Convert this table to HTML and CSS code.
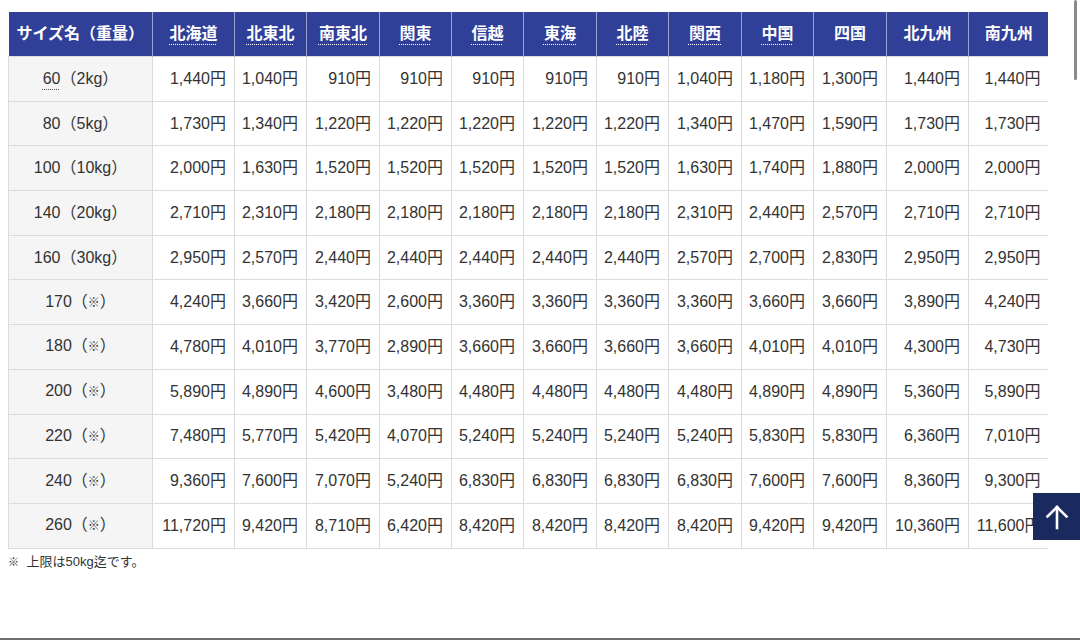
FILE: index.html
```html
<!DOCTYPE html>
<html lang="ja">
<head>
<meta charset="utf-8">
<link rel="stylesheet" href="styles.css">
</head>
<body>
<div class="page">
  <div class="table-wrap">
    <table class="rate">
      <colgroup>
        <col class="c-size"><col class="c-w"><col class="c-n"><col class="c-m"><col class="c-n"><col class="c-n"><col class="c-m"><col class="c-n"><col class="c-m"><col class="c-n"><col class="c-m"><col class="c-w"><col class="c-l">
      </colgroup>
      <thead>
        <tr>
          <th>サイズ名（重量）</th>
          <th><span class="abbr">北海道</span></th>
          <th><span class="abbr">北東北</span></th>
          <th><span class="abbr">南東北</span></th>
          <th><span class="abbr">関東</span></th>
          <th><span class="abbr">信越</span></th>
          <th><span class="abbr">東海</span></th>
          <th><span class="abbr">北陸</span></th>
          <th><span class="abbr">関西</span></th>
          <th><span class="abbr">中国</span></th>
          <th>四国</th>
          <th>北九州</th>
          <th>南九州</th>
        </tr>
      </thead>
      <tbody>
        <tr><th><span class="abbr-d">60</span>（2kg）</th><td>1,440円</td><td>1,040円</td><td>910円</td><td>910円</td><td>910円</td><td>910円</td><td>910円</td><td>1,040円</td><td>1,180円</td><td>1,300円</td><td>1,440円</td><td>1,440円</td></tr>
        <tr><th>80（5kg）</th><td>1,730円</td><td>1,340円</td><td>1,220円</td><td>1,220円</td><td>1,220円</td><td>1,220円</td><td>1,220円</td><td>1,340円</td><td>1,470円</td><td>1,590円</td><td>1,730円</td><td>1,730円</td></tr>
        <tr><th>100（10kg）</th><td>2,000円</td><td>1,630円</td><td>1,520円</td><td>1,520円</td><td>1,520円</td><td>1,520円</td><td>1,520円</td><td>1,630円</td><td>1,740円</td><td>1,880円</td><td>2,000円</td><td>2,000円</td></tr>
        <tr><th>140（20kg）</th><td>2,710円</td><td>2,310円</td><td>2,180円</td><td>2,180円</td><td>2,180円</td><td>2,180円</td><td>2,180円</td><td>2,310円</td><td>2,440円</td><td>2,570円</td><td>2,710円</td><td>2,710円</td></tr>
        <tr><th>160（30kg）</th><td>2,950円</td><td>2,570円</td><td>2,440円</td><td>2,440円</td><td>2,440円</td><td>2,440円</td><td>2,440円</td><td>2,570円</td><td>2,700円</td><td>2,830円</td><td>2,950円</td><td>2,950円</td></tr>
        <tr><th>170（<span class="kome">※</span>）</th><td>4,240円</td><td>3,660円</td><td>3,420円</td><td>2,600円</td><td>3,360円</td><td>3,360円</td><td>3,360円</td><td>3,360円</td><td>3,660円</td><td>3,660円</td><td>3,890円</td><td>4,240円</td></tr>
        <tr><th>180（<span class="kome">※</span>）</th><td>4,780円</td><td>4,010円</td><td>3,770円</td><td>2,890円</td><td>3,660円</td><td>3,660円</td><td>3,660円</td><td>3,660円</td><td>4,010円</td><td>4,010円</td><td>4,300円</td><td>4,730円</td></tr>
        <tr><th>200（<span class="kome">※</span>）</th><td>5,890円</td><td>4,890円</td><td>4,600円</td><td>3,480円</td><td>4,480円</td><td>4,480円</td><td>4,480円</td><td>4,480円</td><td>4,890円</td><td>4,890円</td><td>5,360円</td><td>5,890円</td></tr>
        <tr><th>220（<span class="kome">※</span>）</th><td>7,480円</td><td>5,770円</td><td>5,420円</td><td>4,070円</td><td>5,240円</td><td>5,240円</td><td>5,240円</td><td>5,240円</td><td>5,830円</td><td>5,830円</td><td>6,360円</td><td>7,010円</td></tr>
        <tr><th>240（<span class="kome">※</span>）</th><td>9,360円</td><td>7,600円</td><td>7,070円</td><td>5,240円</td><td>6,830円</td><td>6,830円</td><td>6,830円</td><td>6,830円</td><td>7,600円</td><td>7,600円</td><td>8,360円</td><td>9,300円</td></tr>
        <tr><th>260（<span class="kome">※</span>）</th><td>11,720円</td><td>9,420円</td><td>8,710円</td><td>6,420円</td><td>8,420円</td><td>8,420円</td><td>8,420円</td><td>8,420円</td><td>9,420円</td><td>9,420円</td><td>10,360円</td><td>11,600円</td></tr>
      </tbody>
    </table>
  </div>
  <p class="note"><span class="kome">※</span> 上限は50kg迄です。</p>
</div>
<a class="to-top" href="#" aria-label="ページトップへ">
  <svg width="24" height="26" viewBox="0 0 24 26" fill="none" stroke="#fff" stroke-width="2.6" stroke-linecap="square"><path d="M12 24V3"/><path d="M2.5 12.5L12 3l9.5 9.5"/></svg>
</a>
<div class="scroll-thumb"></div>
</body>
</html>
```
FILE: styles.css
```css
html, body {
  margin: 0;
  padding: 0;
  background: #fff;
}
body {
  font-family: "Liberation Sans", "Noto Sans CJK JP", sans-serif;
  color: #333;
  overflow: hidden;
}
.page {
  box-sizing: border-box;
  height: 640px;
  padding: 12px 0 0 8px;
  border-bottom: 2px solid #6e6e6e;
}
.table-wrap {
  width: 1040px;
  overflow: hidden;
}
.rate {
  border-collapse: collapse;
  table-layout: fixed;
  width: 1040px;
  font-size: 16px;
  line-height: 20px;
}
.c-size { width: 144px; }
.c-w { width: 82px; }
.c-n { width: 72px; }
.c-m { width: 73px; }
.c-l { width: 80px; }
.rate thead th {
  background: #303f98;
  color: #fff;
  font-weight: bold;
  height: 44px;
  padding: 0;
  text-align: center;
  border-left: 1px solid #9aa2d2;
  border-right: 1px solid #9aa2d2;
}
.rate thead th:first-child { border-left: none; }
.rate thead th:last-child { border-right: none; }
.abbr, .abbr-d {
  text-decoration: underline dotted;
  text-underline-offset: 5px;
  text-decoration-thickness: 1px;
}
.abbr-d { text-decoration-color: #555; }
.rate tbody th {
  background: #f5f5f5;
  font-weight: normal;
  text-align: center;
  padding: 0;
  border: 1px solid #dcdcdc;
  height: 43.7px;
}
.rate tbody td {
  text-align: right;
  padding: 0 8px 0 0;
  border: 1px solid #dcdcdc;
  height: 43.7px;
  white-space: nowrap;
}
.rate tbody td:last-child { border-right: none; }
.kome {
  font-size: 12px;
}
.note {
  margin: 4px 0 0 0;
  font-size: 13px;
  line-height: 18px;
  color: #333;
}
.note .kome {
  font-size: 11px;
  margin-right: 4px;
}
.to-top {
  position: fixed;
  right: 0;
  top: 493px;
  width: 47px;
  height: 47px;
  background: #1b2a5e;
  display: flex;
  align-items: center;
  justify-content: center;
}
.scroll-thumb {
  position: fixed;
  right: 3px;
  top: 0;
  width: 3px;
  height: 80px;
  background: #8a8a8a;
  border-radius: 2px;
}
```
